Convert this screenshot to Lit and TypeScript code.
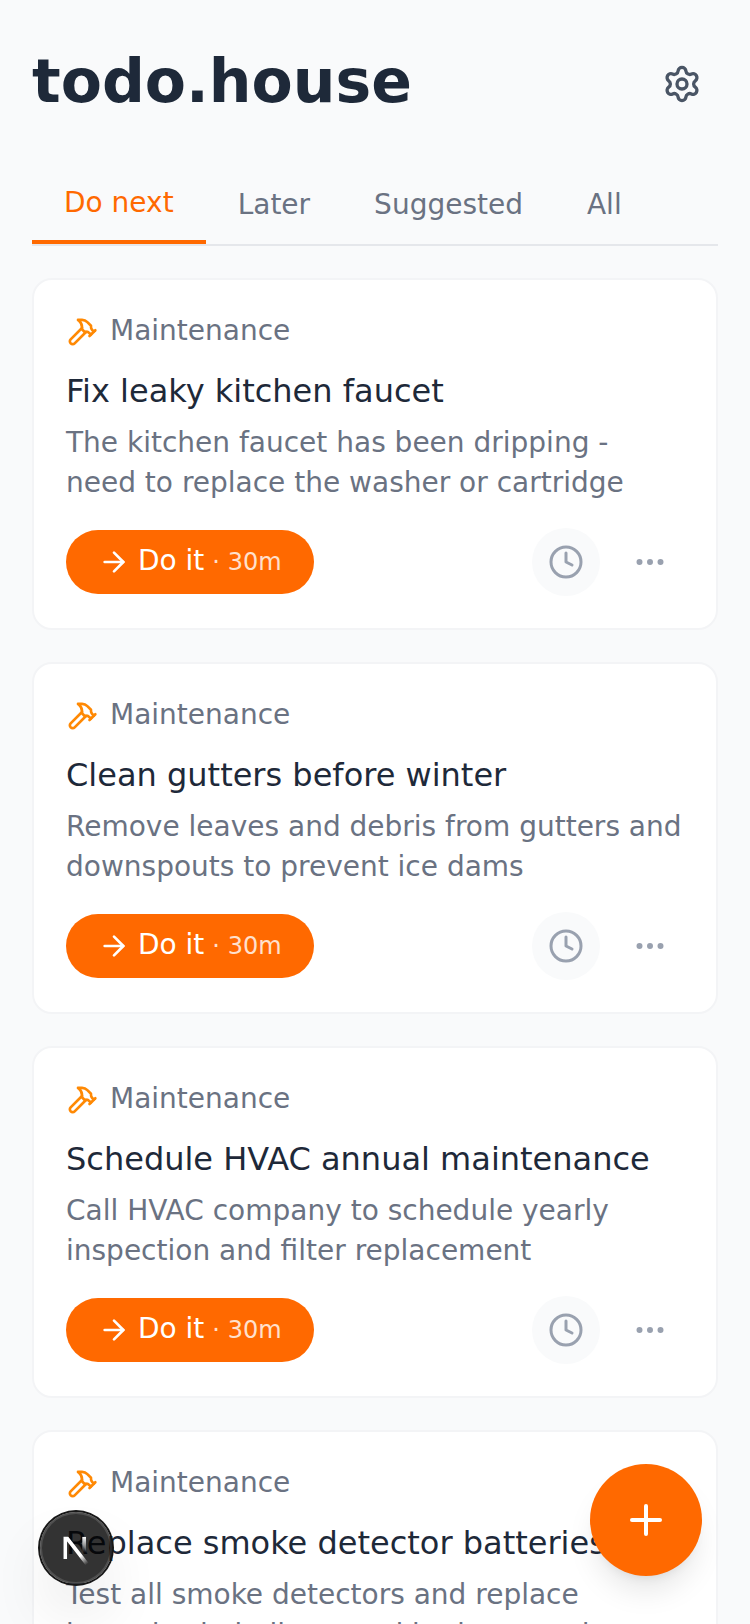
import { LitElement, html, css, svg } from "lit";
import { customElement, property, state } from "lit/decorators.js";
import { classMap } from "lit/directives/class-map.js";

interface Task {
  category: string;
  title: string;
  description: string;
  duration: string;
}

const tabs = ["Do next", "Later", "Suggested", "All"];

const tasks: Task[] = [
  {
    category: "Maintenance",
    title: "Fix leaky kitchen faucet",
    description: "The kitchen faucet has been dripping - need to replace the washer or cartridge",
    duration: "30m",
  },
  {
    category: "Maintenance",
    title: "Clean gutters before winter",
    description: "Remove leaves and debris from gutters and downspouts to prevent ice dams",
    duration: "30m",
  },
  {
    category: "Maintenance",
    title: "Schedule HVAC annual maintenance",
    description: "Call HVAC company to schedule yearly inspection and filter replacement",
    duration: "30m",
  },
  {
    category: "Maintenance",
    title: "Replace smoke detector batteries",
    description: "Test all smoke detectors and replace batteries in hallway and bedroom units",
    duration: "30m",
  },
];

const glyphs = {
  settings: svg`<path d="M9.671 4.136a2.34 2.34 0 0 1 4.659 0 2.34 2.34 0 0 0 3.319 1.915 2.34 2.34 0 0 1 2.33 4.033 2.34 2.34 0 0 0 0 3.831 2.34 2.34 0 0 1-2.33 4.033 2.34 2.34 0 0 0-3.319 1.915 2.34 2.34 0 0 1-4.659 0 2.34 2.34 0 0 0-3.32-1.915 2.34 2.34 0 0 1-2.33-4.033 2.34 2.34 0 0 0 0-3.831A2.34 2.34 0 0 1 6.35 6.051a2.34 2.34 0 0 0 3.319-1.915"/><circle cx="12" cy="12" r="3"/>`,
  hammer: svg`<path d="m15 12-8.5 8.5c-.83.83-2.17.83-3 0a2.12 2.12 0 0 1 0-3L12 9"/><path d="M17.64 15 22 10.64"/><path d="m20.91 11.7-1.25-1.25c-.6-.6-.93-1.4-.93-2.25v-.86L16.01 4.6a5.56 5.56 0 0 0-3.94-1.64H9l.92.82A6.18 6.18 0 0 1 12 8.4v1.56l2 2h2.47l2.26 1.91"/>`,
  arrow: svg`<path d="M5 12h14"/><path d="m12 5 7 7-7 7"/>`,
  clock: svg`<circle cx="12" cy="12" r="10"/><path d="M12 6v6l4 2"/>`,
  dots: svg`<circle cx="12" cy="12" r="1"/><circle cx="19" cy="12" r="1"/><circle cx="5" cy="12" r="1"/>`,
  plus: svg`<path d="M5 12h14"/><path d="M12 5v14"/>`,
};

@customElement("line-icon")
export class LineIcon extends LitElement {
  static styles = css`
    :host {
      display: block;
      flex: none;
      width: var(--icon-size, 32px);
      height: var(--icon-size, 32px);
    }
    .glyph {
      display: block;
      width: 100%;
      height: 100%;
      fill: none;
      stroke: currentColor;
      stroke-width: 2;
      stroke-linecap: round;
      stroke-linejoin: round;
    }
  `;

  @property() name: keyof typeof glyphs = "plus";

  render() {
    return html`<svg class="glyph" viewBox="0 0 24 24">${glyphs[this.name]}</svg>`;
  }
}

@customElement("task-card")
export class TaskCard extends LitElement {
  static styles = css`
    :host {
      display: block;
    }
    .card {
      box-sizing: border-box;
      border: 2px solid #f3f4f6;
      border-radius: 20px;
      background: #fff;
      padding: 32px;
    }
    .category {
      display: flex;
      align-items: center;
      gap: 12px;
      height: 40px;
      margin-bottom: 16px;
      font-size: 28px;
      line-height: 40px;
      color: #6a7282;
    }
    .category-icon {
      --icon-size: 32px;
      color: #ff8904;
    }
    .category-name {
      margin-bottom: 1px;
      margin-top: -1px;
    }
    .title {
      margin: -1px 0 9px;
      font-size: 32px;
      font-weight: 400;
      line-height: 48px;
      color: #1e2939;
    }
    .description {
      margin: -1px 0 25px;
      font-size: 28px;
      line-height: 40px;
      color: #6a7282;
    }
    .actions {
      display: flex;
      align-items: center;
      justify-content: space-between;
    }
    .tools {
      display: flex;
      gap: 16px;
    }
    button {
      border: 0;
      margin: 0;
      background: none;
      font: inherit;
      cursor: pointer;
    }
    .start {
      display: flex;
      align-items: center;
      gap: 8px;
      height: 64px;
      padding: 0 32px;
      border-radius: 32px;
      background: #ff6900;
      color: #fff;
      font-size: 28px;
      line-height: 40px;
      white-space: nowrap;
    }
    .start-icon {
      --icon-size: 32px;
    }
    .start-label {
      margin-bottom: 1px;
      margin-top: -1px;
    }
    .duration {
      margin-left: 8px;
      font-size: 24px;
      opacity: 0.8;
    }
    .tool {
      --icon-size: 36px;
      padding: 16px;
      border-radius: 50%;
      color: #99a1af;
    }
    .tool-filled {
      background: #f9fafb;
    }
  `;

  @property({ attribute: false }) task!: Task;

  render() {
    const { category, title, description, duration } = this.task;
    return html`
      <article class="card">
        <div class="category">
          <line-icon class="category-icon" name="hammer"></line-icon>
          <span class="category-name">${category}</span>
        </div>
        <h3 class="title">${title}</h3>
        <p class="description">${description}</p>
        <div class="actions">
          <button class="start">
            <line-icon class="start-icon" name="arrow"></line-icon>
            <span class="start-label">Do it<span class="duration">· ${duration}</span></span>
          </button>
          <div class="tools">
            <button class="tool tool-filled" aria-label="Snooze"><line-icon name="clock"></line-icon></button>
            <button class="tool" aria-label="More"><line-icon name="dots"></line-icon></button>
          </div>
        </div>
      </article>
    `;
  }
}

@customElement("app-root")
export class AppRoot extends LitElement {
  static styles = css`
    :host {
      display: block;
      position: relative;
      box-sizing: border-box;
      height: 100vh;
      overflow: hidden;
      padding: 48px 32px 0;
      background: #f9fafb;
      font-family: "DejaVu Sans", sans-serif;
    }
    button {
      border: 0;
      margin: 0;
      background: none;
      font: inherit;
      cursor: pointer;
    }
    .header {
      display: flex;
      align-items: center;
      justify-content: space-between;
      height: 72px;
      margin-bottom: 48px;
    }
    .brand {
      margin: -3px 0 3px;
      font-size: 60px;
      font-weight: 700;
      line-height: 72px;
      color: #1e2939;
    }
    .settings {
      --icon-size: 40px;
      padding: 16px;
      color: #4a5565;
    }
    .tabs {
      display: flex;
      border-bottom: 2px solid #e5e7eb;
      margin-bottom: 32px;
    }
    .tab {
      display: flex;
      align-items: center;
      height: 76px;
      box-sizing: border-box;
      padding: 0 32px 2px;
      font-size: 28px;
      line-height: 40px;
      color: #6a7282;
    }
    .tab-active {
      color: #ff6900;
      border-bottom: 4px solid #ff6900;
    }
    .list {
      display: flex;
      flex-direction: column;
      gap: 32px;
    }
    .add {
      --icon-size: 48px;
      position: absolute;
      right: 48px;
      bottom: 48px;
      width: 112px;
      height: 112px;
      padding: 32px;
      border-radius: 50%;
      background: #ff6900;
      color: #fff;
      box-shadow: 0 20px 30px -6px rgb(0 0 0 / 0.1), 0 8px 12px -8px rgb(0 0 0 / 0.1);
    }
    .dev-badge {
      position: absolute;
      left: 40px;
      bottom: 40px;
      width: 72px;
      height: 72px;
      padding: 0;
      border-radius: 50%;
      background: rgb(0 0 0 / 0.8);
      box-shadow: 0 0 0 2px #171717, inset 0 0 0 2px rgb(255 255 255 / 0.14),
        0 32px 64px -16px rgb(0 0 0 / 0.24);
    }
    .dev-mark {
      display: block;
      width: 72px;
      height: 72px;
      fill: none;
    }
  `;

  @state() private active = tabs[0];

  render() {
    return html`
      <header class="header">
        <h1 class="brand">todo.house</h1>
        <button class="settings" aria-label="Settings"><line-icon name="settings"></line-icon></button>
      </header>
      <nav class="tabs">
        ${tabs.map(
          (tab) => html`<button
            class=${classMap({ tab: true, "tab-active": tab === this.active })}
            @click=${() => (this.active = tab)}
          ><span class="tab-label">${tab}</span></button>`
        )}
      </nav>
      <main class="list">${tasks.map((task) => html`<task-card .task=${task}></task-card>`)}</main>
      <button class="add" aria-label="Add"><line-icon name="plus"></line-icon></button>
      <button class="dev-badge" aria-label="Developer tools">
        <svg class="dev-mark" viewBox="0 0 36 36">
          <defs>
            <linearGradient id="diagonal" gradientUnits="userSpaceOnUse" x1="9.955" y1="11.13" x2="15.45" y2="17.96">
              <stop stop-color="white" />
              <stop offset="0.604" stop-color="white" stop-opacity="0" />
            </linearGradient>
            <linearGradient id="upright" gradientUnits="userSpaceOnUse" x1="11.822" y1="1.4" x2="11.79" y2="9.625">
              <stop stop-color="white" />
              <stop offset="1" stop-color="white" stop-opacity="0" />
            </linearGradient>
            <clipPath id="bounds"><rect x="1.41" y="1.5" width="14" height="16" /></clipPath>
          </defs>
          <g transform="translate(10.25 10.9)" stroke-width="1.86" clip-path="url(#bounds)">
            <path d="M13.3 15.2 2.34 1v11.6" stroke="url(#diagonal)" />
            <path d="M11.825 1.5v11.6" stroke="url(#upright)" />
          </g>
        </svg>
      </button>
    `;
  }
}
